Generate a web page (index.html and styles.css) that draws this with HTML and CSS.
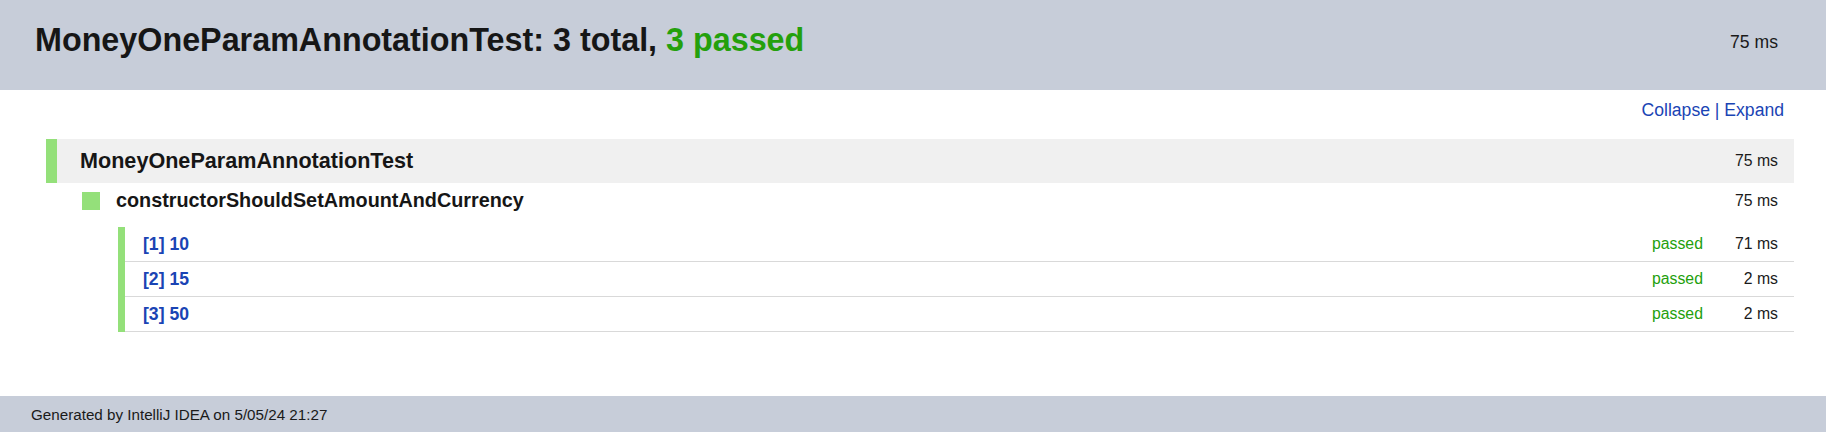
FILE: index.html
```html
<!DOCTYPE html>
<html>
<head>
<meta charset="utf-8">
<title>MoneyOneParamAnnotationTest</title>
<link rel="stylesheet" href="styles.css">
</head>
<body>
<div class="page">
  <header class="header">
    <h1 class="title">MoneyOneParamAnnotationTest: 3 total, <span class="ok">3 passed</span></h1>
    <span class="time">75 ms</span>
  </header>
  <div class="toolbar"><a href="#">Collapse</a> | <a href="#">Expand</a></div>
  <main class="tree">
    <div class="suite">
      <span class="suite-name">MoneyOneParamAnnotationTest</span>
      <span class="ms">75 ms</span>
    </div>
    <div class="method">
      <span class="marker"></span>
      <span class="method-name">constructorShouldSetAmountAndCurrency</span>
      <span class="ms">75 ms</span>
    </div>
    <div class="tests">
      <div class="test"><a class="test-name" href="#">[1] 10</a><span class="status">passed</span><span class="ms">71 ms</span></div>
      <div class="test"><a class="test-name" href="#">[2] 15</a><span class="status">passed</span><span class="ms">2 ms</span></div>
      <div class="test"><a class="test-name" href="#">[3] 50</a><span class="status">passed</span><span class="ms">2 ms</span></div>
    </div>
  </main>
  <footer class="footer">Generated by IntelliJ IDEA on 5/05/24 21:27</footer>
</div>
</body>
</html>
```

FILE: styles.css
```css
html, body {
  margin: 0;
  padding: 0;
  background: #ffffff;
}
body {
  font-family: "Liberation Sans", Arial, sans-serif;
  color: #1a1a1a;
}
.page {
  display: flex;
  flex-direction: column;
  height: 432px;
}
.header {
  height: 90px;
  background: #c7cdd9;
  display: flex;
  align-items: center;
  justify-content: space-between;
  padding: 0 48px 0 35px;
  box-sizing: border-box;
  flex-shrink: 0;
}
.title {
  margin: 0;
  font-size: 32.3px;
  font-weight: bold;
  color: #161616;
  line-height: 1;
  padding-bottom: 9px;
}
.ok { color: #24a00c; }
.time {
  font-size: 17.6px;
  color: #1a1a1a;
  padding-bottom: 6px;
}
.toolbar {
  text-align: right;
  padding: 10px 42px 0 0;
  height: 41px;
  box-sizing: border-box;
  font-size: 17.6px;
  color: #1a44b4;
}
.toolbar a {
  color: #1a44b4;
  text-decoration: none;
}
.tree {
  margin: 8px 32px 0 46px;
  flex: 1;
}
.suite {
  height: 44px;
  background: #f0f0f0;
  border-left: 11px solid #94e07a;
  display: flex;
  align-items: center;
  padding: 0 16px 0 23px;
  box-sizing: border-box;
}
.suite-name {
  flex: 1;
  font-size: 21.6px;
  font-weight: bold;
  color: #161616;
}
.ms {
  font-size: 15.8px;
  color: #1a1a1a;
}
.method {
  height: 35px;
  display: flex;
  align-items: center;
  padding: 0 16px 0 36px;
  box-sizing: border-box;
  margin-bottom: 9px;
}
.marker {
  width: 18px;
  height: 18px;
  background: #94e07a;
  margin-right: 16px;
}
.method-name {
  flex: 1;
  font-size: 19.8px;
  font-weight: bold;
  color: #161616;
}
.tests {
  margin-left: 72px;
  border-left: 7px solid #94e07a;
}
.test {
  height: 35px;
  border-bottom: 1px solid #d9d9d9;
  box-sizing: border-box;
  display: flex;
  align-items: center;
  padding: 0 16px 0 18px;
}
.test-name {
  flex: 1;
  font-size: 17.6px;
  font-weight: bold;
  color: #1a44b4;
  text-decoration: none;
}
.status {
  font-size: 15.8px;
  color: #24a00c;
  width: 82px;
}
.test .ms {
  width: 44px;
  text-align: right;
}
.footer {
  height: 36px;
  background: #c7cdd9;
  font-size: 15.2px;
  color: #1a1a1a;
  padding-left: 31px;
  display: flex;
  align-items: center;
  flex-shrink: 0;
}
```
